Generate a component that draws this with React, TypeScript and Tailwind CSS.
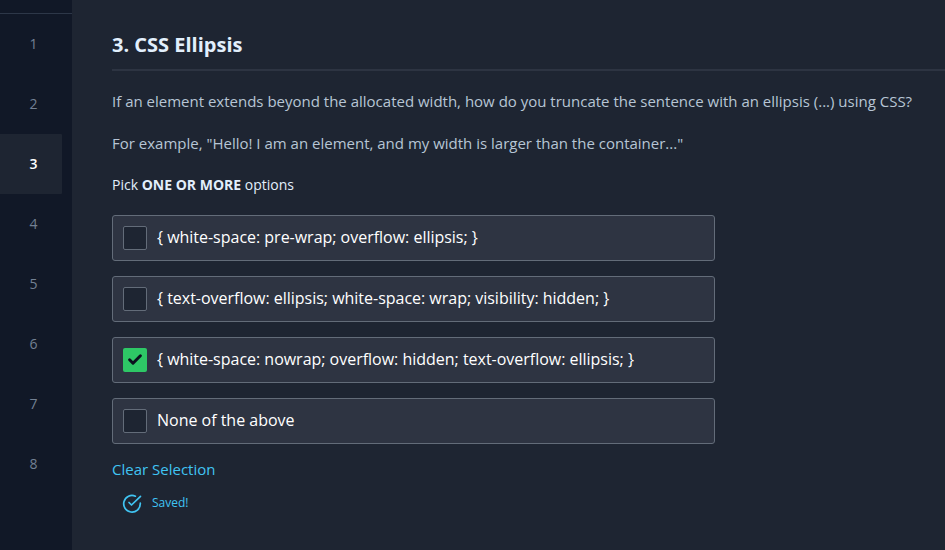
import React from "react";

const options = [
  { text: "{ white-space: pre-wrap; overflow: ellipsis; }", on: false },
  { text: "{ text-overflow: ellipsis; white-space: wrap; visibility: hidden; }", on: false },
  { text: "{ white-space: nowrap; overflow: hidden; text-overflow: ellipsis; }", on: true },
  { text: "None of the above", on: false },
];

export default function App() {
  return (
    <div className="flex h-[550px] w-[945px] overflow-hidden bg-[#1e2532] font-['Open_Sans',sans-serif]">
      <nav className="w-[72px] shrink-0 bg-[#111827]">
        <div className="h-[14px] border-b border-[#2d3748]" />
        {[1, 2, 3, 4, 5, 6, 7, 8].map((n) => (
          <div
            key={n}
            className={
              n === 3
                ? "flex h-[60px] w-[62px] items-center justify-center rounded-r-[1px] bg-[#1e2532] pl-[5px] text-sm font-semibold text-white"
                : "flex h-[60px] w-[62px] items-center justify-center pl-[5px] text-sm text-[#738093]"
            }
          >
            {n}
          </div>
        ))}
      </nav>
      <main className="flex-1 pl-10">
        <h1 className="h-[71px] border-b-2 border-[#2d3442] pt-[31px] text-[20px] leading-[28px] font-bold text-[#e2effc]">
          3. CSS Ellipsis
        </h1>
        <p className="mt-[18px] text-[15px] leading-[24px] whitespace-nowrap text-[#b7c5d5]">
          If an element extends beyond the allocated width, how do you truncate the sentence with an ellipsis (...) using CSS?
        </p>
        <p className="mt-[18px] text-[15px] leading-[24px] whitespace-nowrap text-[#b7c5d5]">
          For example, "Hello! I am an element, and my width is larger than the container..."
        </p>
        <p className="mt-[20px] text-sm leading-[20px] text-[#e2effc]">
          Pick <b className="font-bold">ONE OR MORE</b> options
        </p>
        <div className="mt-[20px] flex w-[603px] flex-col gap-[15px]">
          {options.map((o) => (
            <div key={o.text} className="flex h-[46px] items-center gap-[10px] rounded-[3px] border border-[#636c79] bg-[#2e3442] px-[10px] text-base text-white">
              {o.on ? (
                <span className="flex size-6 items-center justify-center rounded-[2px] bg-[#2ec866]">
                  <svg width="16" height="14" viewBox="0 0 16 14" fill="none" stroke="#0b111e" strokeWidth="3" strokeLinecap="round" strokeLinejoin="round">
                    <path d="M2.6 6.8l3.4 3.4L13.4 2.8" />
                  </svg>
                </span>
              ) : (
                <span className="size-6 rounded-[2px] border border-[#636c79] bg-[#1e2532]" />
              )}
              <span className="pb-[2px] tracking-[-0.015px] whitespace-nowrap">{o.text}</span>
            </div>
          ))}
        </div>
        <div className="mt-[13px] text-[15px] leading-[24px] text-[#40c4f2]">Clear Selection</div>
        <div className="mt-[12px] flex items-center gap-[10px] pl-[10px] text-xs leading-[20px] text-[#40c4f2]">
          <svg width="20" height="20" viewBox="0 0 20 20" fill="none" stroke="currentColor" strokeWidth="1.7" strokeLinecap="round" strokeLinejoin="round">
            <path d="M18.3 9.2v.6a8.3 8.3 0 1 1-4.9-7.6" />
            <path d="M18.5 2.3 9.5 11 7 8.5" />
          </svg>
          <span className="pb-[2px]">Saved!</span>
        </div>
      </main>
    </div>
  );
}
